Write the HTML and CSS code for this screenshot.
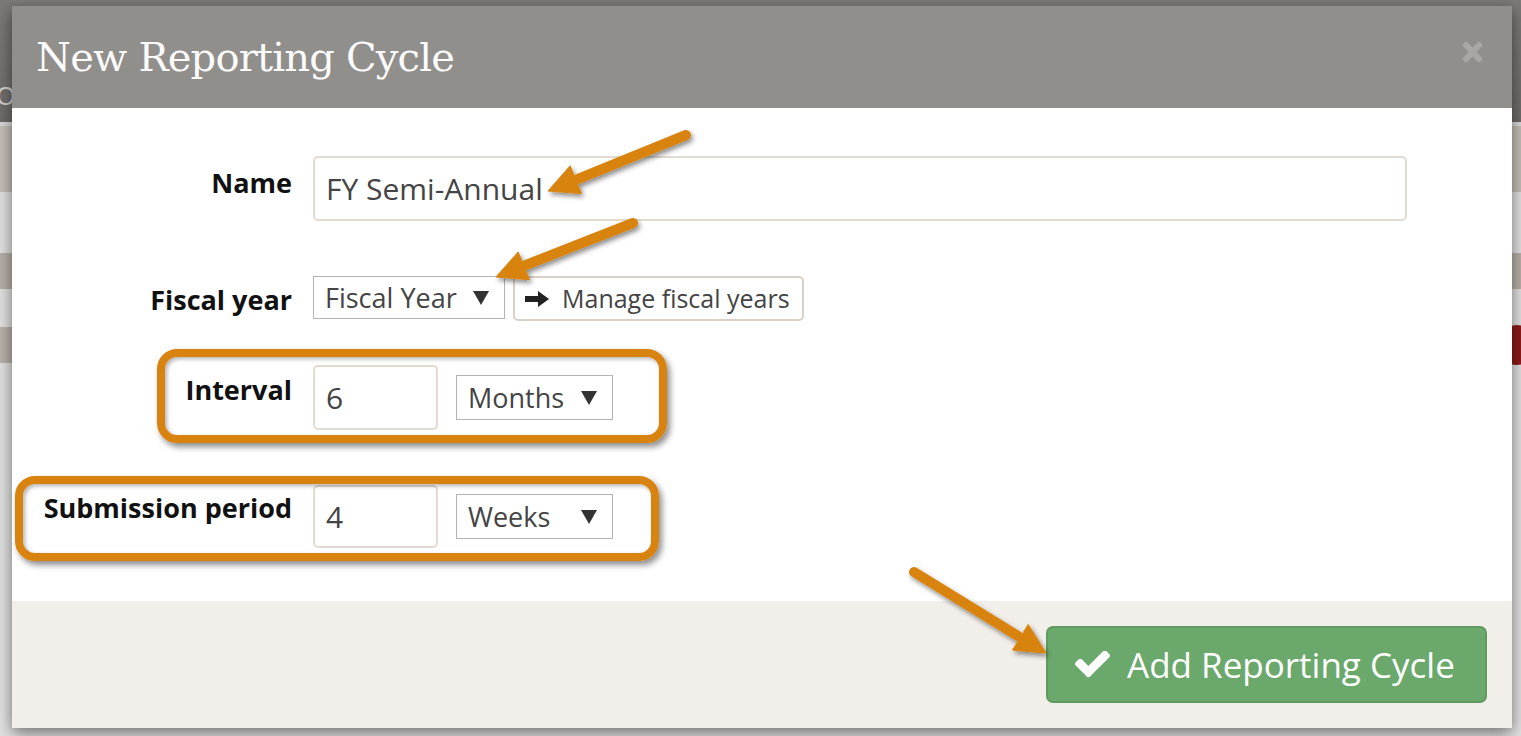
FILE: index.html
```html
<!DOCTYPE html>
<html lang="en">
<head>
<meta charset="utf-8">
<title>New Reporting Cycle</title>
<link rel="stylesheet" href="styles.css">
</head>
<body>
<div class="page">
  <div class="nav"><span class="nav-letter">O</span></div>
  <div class="strip thin"></div>
  <div class="strip beige b1"></div>
  <div class="strip light g1"></div>
  <div class="strip beige b2"></div>
  <div class="strip light g2"></div>
  <div class="strip beige b3"></div>
  <div class="strip light rest"></div>
  <span class="badge"></span>
</div>

<div class="modal">
  <div class="modal-header">
    <h1 class="modal-title">New Reporting Cycle</h1>
    <svg class="close" width="21" height="22" viewBox="0 0 21 22"><path d="M4 4 L17 18 M17 4 L4 18" stroke="#a9a7a4" stroke-width="6" stroke-linecap="round"/></svg>
  </div>
  <div class="modal-body">
    <div class="row row-name">
      <label class="lbl">Name</label>
      <input class="txt txt-name" type="text" value="FY Semi-Annual">
    </div>
    <div class="row row-fy">
      <label class="lbl">Fiscal year</label>
      <div class="controls top">
        <div class="sel sel-fy"><span>Fiscal Year</span><svg class="tri" width="16" height="14" viewBox="0 0 16 14"><polygon points="0,0 16,0 8,14" fill="#333"/></svg></div>
        <button class="btn-manage" type="button"><svg width="24" height="16" viewBox="0 0 24 16"><polygon points="0,5 13,5 13,0 24,8 13,16 13,11 0,11" fill="#222"/></svg><span>Manage fiscal years</span></button>
      </div>
    </div>
    <div class="row row-int">
      <label class="lbl">Interval</label>
      <div class="controls">
        <input class="txt txt-num" type="text" value="6">
        <div class="sel sel-unit"><span>Months</span><svg class="tri" width="16" height="14" viewBox="0 0 16 14"><polygon points="0,0 16,0 8,14" fill="#333"/></svg></div>
      </div>
    </div>
    <div class="row row-sub">
      <label class="lbl">Submission period</label>
      <div class="controls">
        <input class="txt txt-num short" type="text" value="4">
        <div class="sel sel-unit"><span>Weeks</span><svg class="tri" width="16" height="14" viewBox="0 0 16 14"><polygon points="0,0 16,0 8,14" fill="#333"/></svg></div>
      </div>
    </div>
  </div>
  <div class="modal-footer">
    <button class="btn-add" type="button"><svg width="35" height="28" viewBox="121 402 1550 1150"><path fill="#fff" d="M1671 566q0 40-28 68l-724 724-136 136q-28 28-68 28t-68-28l-136-136-362-362q-28-28-28-68t28-68l136-136q28-28 68-28t68 28l294 295 656-657q28-28 68-28t68 28l136 136q28 28 28 68z"/></svg><span>Add Reporting Cycle</span></button>
  </div>
</div>

<div class="annot">
  <div class="callout c-int"></div>
  <div class="callout c-sub"></div>
  <svg class="arrows" width="1521" height="736" viewBox="0 0 1521 736">
    <defs>
      <filter id="sh" x="-30%" y="-30%" width="160%" height="160%">
        <feDropShadow dx="2" dy="3" stdDeviation="2.5" flood-color="#000" flood-opacity="0.45"/>
      </filter>
    </defs>
    <g filter="url(#sh)" fill="#d8830f" stroke="#d8830f">
      <line x1="686" y1="135" x2="578" y2="179" stroke-width="10" stroke-linecap="round"/>
      <polygon points="548,191 581.4,193.6 570.2,165.8" stroke-width="1"/>
    </g>
    <g filter="url(#sh)" fill="#d8830f" stroke="#d8830f">
      <line x1="633" y1="223" x2="526" y2="265" stroke-width="10" stroke-linecap="round"/>
      <polygon points="496,277 529.4,279.7 518.2,251.9" stroke-width="1"/>
    </g>
    <g filter="url(#sh)" fill="#d8830f" stroke="#d8830f">
      <line x1="914" y1="572" x2="1018" y2="636" stroke-width="10" stroke-linecap="round"/>
      <polygon points="1046,653 1012.6,650.1 1028.2,624.5" stroke-width="1"/>
    </g>
  </svg>
</div>
</body>
</html>
```

FILE: styles.css
```css
html, body {
  margin: 0;
  padding: 0;
}
body {
  width: 1521px;
  height: 736px;
  overflow: hidden;
  background: #e2e2e2;
  font-family: "Open Sans", "DejaVu Sans", sans-serif;
  position: relative;
}

/* page behind the modal */
.page {
  display: flex;
  flex-direction: column;
  height: 736px;
  position: relative;
}
.nav {
  height: 122px;
  background: linear-gradient(#7d7b79, #6e6c6a);
  box-sizing: border-box;
  padding-top: 82px;
}
.nav-letter {
  display: block;
  margin-left: -4px;
  font: 400 25px/26px "Open Sans", sans-serif;
  color: #d4d4d4;
}
.strip { flex: none; }
.thin { height: 4px; background: #d9d9d9; }
.beige { background: #c4beb7; }
.light { background: #e1e1e1; }
.b1 { height: 66px; }
.g1 { height: 61px; }
.b2 { height: 36px; background: #b8b0a8; }
.g2 { height: 38px; }
.b3 { height: 36px; background: #bab2aa; }
.rest { flex: 1; }
.badge {
  position: absolute;
  left: 1497px;
  top: 325px;
  width: 40px;
  height: 40px;
  border-radius: 50%;
  background: #8d1a1a;
}

/* modal */
.modal {
  position: absolute;
  left: 12px;
  top: 6px;
  width: 1500px;
  height: 722px;
  background: #fff;
  display: flex;
  flex-direction: column;
  box-shadow: 0 5px 15px rgba(0, 0, 0, 0.5);
}
.modal-header {
  height: 102px;
  flex: none;
  background: #918f8c;
  display: flex;
  justify-content: space-between;
  align-items: flex-start;
  padding: 28px 29px 0 24px;
  box-sizing: border-box;
}
.modal-title {
  margin: 0;
  font: 400 40px/46px "DejaVu Serif", serif;
  letter-spacing: -0.8px;
  color: #fbfbfb;
}
.close {
  margin-top: 7px;
}
.modal-body {
  flex: 1;
}
.row {
  display: flex;
  align-items: flex-start;
}
.lbl {
  width: 301px;
  flex: none;
  box-sizing: border-box;
  padding-right: 21px;
  text-align: right;
  font: 700 27px/36px "Open Sans", sans-serif;
  color: #111;
}
.controls {
  display: flex;
  align-items: center;
}
.controls.top {
  align-items: flex-start;
}
.row-name { margin-top: 48px; }
.row-name .lbl { padding-top: 9px; }
.row-fy { margin-top: 55px; }
.row-fy .lbl { padding-top: 6px; }
.row-int { margin-top: 44px; }
.row-int .lbl { padding-top: 7px; }
.row-sub { margin-top: 55px; }
.row-sub .lbl { padding-top: 5px; }

.txt {
  box-sizing: border-box;
  height: 65px;
  border: 2px solid #e2dbd2;
  border-radius: 5px;
  background: #fff;
  padding: 0 11px;
  margin: 0;
  font: 400 30px "Open Sans", sans-serif;
  color: #444;
  outline: none;
}
.txt-name { width: 1094px; }
.txt-num { width: 125px; }
.txt-num.short { height: 63px; }

.sel {
  box-sizing: border-box;
  height: 45px;
  border: 1px solid #b4b4b4;
  background: #fff;
  display: flex;
  align-items: center;
  justify-content: space-between;
  padding: 0 15px 0 11px;
  font: 400 27px/1 "Open Sans", sans-serif;
  color: #444;
}
.sel-fy {
  width: 192px;
  height: 43px;
}
.sel-unit {
  width: 157px;
  margin-left: 18px;
}
.tri { flex: none; }

.btn-manage {
  margin: 0 0 0 8px;
  height: 45px;
  box-sizing: border-box;
  border: 2px solid #d9d1c7;
  border-radius: 5px;
  background: #fff;
  display: flex;
  align-items: center;
  gap: 13px;
  padding: 0 12px 0 10px;
  font: 400 25px/1 "Open Sans", sans-serif;
  color: #444;
}

.modal-footer {
  height: 127px;
  flex: none;
  background: #f2efea;
  display: flex;
  justify-content: flex-end;
  align-items: flex-start;
  padding: 25px 25px 0;
  box-sizing: border-box;
}
.btn-add {
  width: 441px;
  height: 77px;
  box-sizing: border-box;
  margin: 0;
  background: #6ba86c;
  border: 2px solid #5f9b60;
  border-radius: 7px;
  color: #fff;
  display: flex;
  align-items: center;
  gap: 17px;
  padding: 0 0 0 27px;
  font: 400 35px/1 "Open Sans", sans-serif;
}

/* annotations drawn over the screenshot */
.annot {
  position: absolute;
  left: 0;
  top: 0;
  width: 1521px;
  height: 736px;
  pointer-events: none;
}
.callout {
  position: absolute;
  box-sizing: border-box;
  border: 8px solid #d8830f;
  border-radius: 20px;
  box-shadow: 3px 4px 6px rgba(0, 0, 0, 0.45), inset 2px 2px 4px rgba(0, 0, 0, 0.3);
}
.c-int {
  left: 157px;
  top: 349px;
  width: 510px;
  height: 94px;
}
.c-sub {
  left: 15px;
  top: 476px;
  width: 644px;
  height: 85px;
}
.arrows {
  position: absolute;
  left: 0;
  top: 0;
}
```
